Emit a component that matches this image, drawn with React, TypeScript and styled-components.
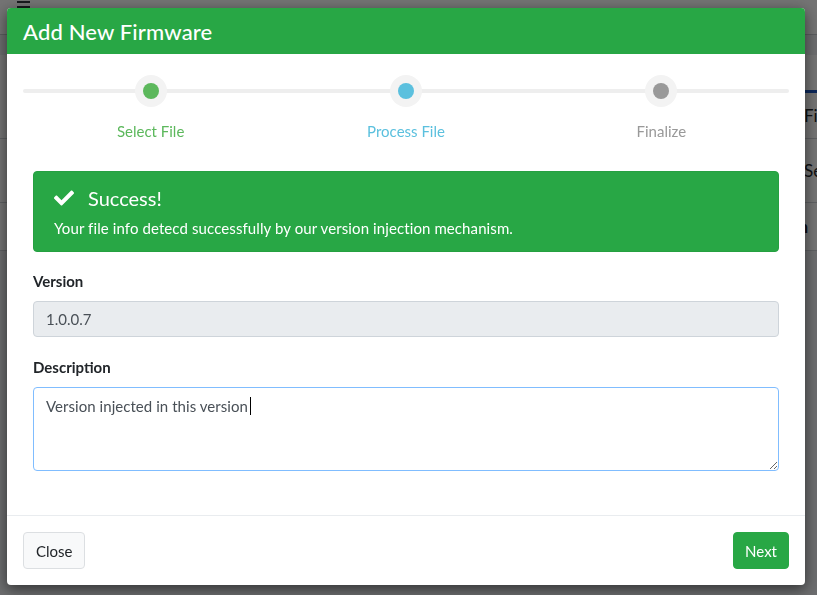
import React from "react";
import styled, { createGlobalStyle } from "styled-components";

const GlobalStyle = createGlobalStyle`
  html, body {
    margin: 0;
    padding: 0;
    width: 100%;
    height: 100%;
    overflow: hidden;
  }
  body {
    font-family: "Lato", "Open Sans", sans-serif;
    background: #f4f6f9;
  }
  * { box-sizing: border-box; }
`;

/* ---------- background page (mostly hidden) ---------- */
const Page = styled.div`
  width: 817px;
  height: 595px;
  display: flex;
  flex-direction: column;
  background: #eef0f3;
  color: #212529;
  overflow: hidden;
`;

const Navbar = styled.div`
  height: 35px;
  background: #fff;
  border-bottom: 1px solid #c9cdd2;
  display: flex;
  align-items: flex-start;
  padding: 1px 0 0 17px;
`;

const Burger = styled.div`
  width: 13px;
  display: flex;
  flex-direction: column;
  gap: 3px;
  span {
    height: 2px;
    background: #343a40;
  }
`;

const Tabs = styled.div`
  height: 38px;
  margin-top: 20px;
  background: #fff;
  display: flex;
  align-items: flex-end;
  padding-left: 790px;
`;

const TabActive = styled.div`
  width: 40px;
  height: 3px;
  background: #1a56c4;
`;

const PageRow = styled.div<{ $h: number; $bold?: boolean }>`
  height: ${(p) => p.$h}px;
  background: #fff;
  border-bottom: 1px solid #cfd3d8;
  display: flex;
  align-items: center;
  padding-left: ${(p) => (p.$bold ? 751 : 804)}px;
  font-size: 17px;
  font-weight: ${(p) => (p.$bold ? 700 : 400)};
  color: #212529;
  white-space: nowrap;
`;

/* ---------- overlay + modal ---------- */
const Backdrop = styled.div`
  position: fixed;
  inset: 0;
  background: rgba(0, 0, 0, 0.55);
  padding: 8px 12px 10px 7px;
  display: flex;
`;

const Modal = styled.div`
  width: 798px;
  height: 577px;
  background: #fff;
  border-radius: 4px;
  box-shadow: 0 4px 14px rgba(0, 0, 0, 0.55);
  display: flex;
  flex-direction: column;
  overflow: hidden;
`;

const Header = styled.div`
  height: 46px;
  flex: none;
  background: #28a745;
  display: flex;
  align-items: center;
  padding: 0 16px;
`;

const Title = styled.h5`
  margin: 0;
  color: #fff;
  font-size: 22px;
  font-weight: 500;
  letter-spacing: 0.15px;
`;

const Body = styled.div`
  flex: 1;
  padding: 16px;
`;

const Stepper = styled.div`
  position: relative;
  display: grid;
  grid-template-columns: repeat(3, 1fr);
  padding-top: 5px;
  &::before {
    content: "";
    position: absolute;
    left: 0;
    right: 0;
    top: 19px;
    height: 4px;
    border-radius: 2px;
    background: #eeeeee;
  }
`;

const Step = styled.div`
  position: relative;
  display: flex;
  flex-direction: column;
  align-items: center;
`;

const StepCircle = styled.div`
  width: 32px;
  height: 32px;
  border-radius: 50%;
  background: #f3f3f3;
  display: flex;
  align-items: center;
  justify-content: center;
`;

const StepDot = styled.div<{ $color: string }>`
  width: 16px;
  height: 16px;
  border-radius: 50%;
  background: ${(p) => p.$color};
`;

const StepLabel = styled.div<{ $color: string }>`
  margin-top: 13px;
  font-size: 15px;
  line-height: 22px;
  color: ${(p) => p.$color};
`;

const FormArea = styled.div`
  padding: 0 10px;
`;

const Alert = styled.div`
  margin-top: 29px;
  background: #28a745;
  border: 1px solid #25a041;
  border-radius: 4px;
  padding: 12px 20px;
  color: #fff;
`;

const AlertHeading = styled.div`
  display: flex;
  align-items: center;
  gap: 14px;
  font-size: 20px;
  line-height: 28px;
  svg {
    width: 20px;
    height: 20px;
    fill: #fff;
  }
`;

const AlertText = styled.div`
  margin-top: 5px;
  font-size: 15px;
  line-height: 22px;
  letter-spacing: 0.1px;
`;

const Label = styled.div<{ $top: number }>`
  margin-top: ${(p) => p.$top}px;
  margin-bottom: 9px;
  font-size: 15px;
  line-height: 22px;
  font-weight: 700;
  color: #212529;
`;

const ReadonlyInput = styled.div`
  height: 36px;
  background: #e9ecef;
  border: 1px solid #ced4da;
  border-radius: 4px;
  padding: 0 12px;
  display: flex;
  align-items: center;
  font-size: 15px;
  color: #495057;
`;

const DescriptionBox = styled.div`
  height: 84px;
  border: 1px solid #80bdff;
  border-radius: 4px;
  padding: 6px 12px;
  font-size: 15px;
  line-height: 24px;
  color: #495057;
  letter-spacing: 0.05px;
  resize: vertical;
  overflow: auto;
`;

const Caret = styled.span`
  display: inline-block;
  width: 1px;
  height: 18px;
  background: #000;
  vertical-align: -3px;
  margin-left: 2px;
`;

const Footer = styled.div`
  flex: none;
  border-top: 1px solid #e9ecef;
  padding: 16px;
  display: flex;
  justify-content: space-between;
`;

const Button = styled.button<{ $variant: "light" | "success" }>`
  height: 37px;
  padding: 0 ${(p) => (p.$variant === "success" ? 11 : 12)}px;
  border-radius: 4px;
  font-family: inherit;
  font-size: 15px;
  cursor: pointer;
  border: 1px solid ${(p) => (p.$variant === "success" ? "#28a745" : "#dcdfe2")};
  background: ${(p) => (p.$variant === "success" ? "#28a745" : "#f8f9fa")};
  color: ${(p) => (p.$variant === "success" ? "#fff" : "#212529")};
`;

const steps = [
  { label: "Select File", color: "#5cb85c" },
  { label: "Process File", color: "#5bc0de" },
  { label: "Finalize", color: "#999999" },
];

export default function App() {
  return (
    <>
      <GlobalStyle />
      <Page>
        <Navbar>
          <Burger>
            <span />
            <span />
            <span />
          </Burger>
        </Navbar>
        <Tabs>
          <TabActive />
        </Tabs>
        <PageRow $h={46}>Fi</PageRow>
        <PageRow $h={64}>Se</PageRow>
        <PageRow $h={48} $bold>
          Version
        </PageRow>
      </Page>
      <Backdrop>
        <Modal>
          <Header>
            <Title>Add New Firmware</Title>
          </Header>
          <Body>
            <Stepper>
              {steps.map((s) => (
                <Step key={s.label}>
                  <StepCircle>
                    <StepDot $color={s.color} />
                  </StepCircle>
                  <StepLabel $color={s.color}>{s.label}</StepLabel>
                </Step>
              ))}
            </Stepper>
            <FormArea>
              <Alert>
                <AlertHeading>
                  <svg viewBox="0 0 512 512">
                    <path d="M173.898 439.404l-166.4-166.4c-9.997-9.997-9.997-26.206 0-36.204l36.203-36.204c9.997-9.998 26.207-9.998 36.204 0L192 312.69 432.095 72.596c9.997-9.997 26.207-9.997 36.204 0l36.203 36.204c9.997 9.997 9.997 26.206 0 36.204l-294.4 294.401c-9.998 9.997-26.207 9.997-36.204-.001z" />
                  </svg>
                  Success!
                </AlertHeading>
                <AlertText>
                  Your file info detecd successfully by our version injection mechanism.
                </AlertText>
              </Alert>
              <Label $top={18}>Version</Label>
              <ReadonlyInput>1.0.0.7</ReadonlyInput>
              <Label $top={19}>Description</Label>
              <DescriptionBox>
                Version injected in this version
                <Caret />
              </DescriptionBox>
            </FormArea>
          </Body>
          <Footer>
            <Button $variant="light">Close</Button>
            <Button $variant="success">Next</Button>
          </Footer>
        </Modal>
      </Backdrop>
    </>
  );
}
